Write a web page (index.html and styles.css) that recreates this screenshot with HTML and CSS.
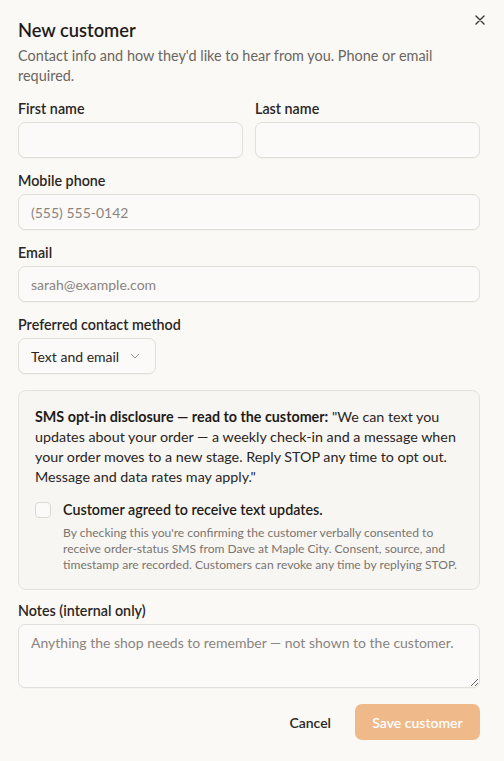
FILE: index.html
```
<!DOCTYPE html>
<html lang="en">
<head>
<meta charset="utf-8">
<title>New customer</title>
<link rel="stylesheet" href="styles.css">
</head>
<body>
<div class="dialog">
  <div class="header">
    <h1 class="title">New customer</h1>
    <button class="close" aria-label="Close">
      <svg width="10" height="10" viewBox="0 0 10 10"><path d="M1 1L9 9M9 1L1 9" stroke="#3a3532" stroke-width="1.4" stroke-linecap="round"/></svg>
    </button>
  </div>
  <p class="subtitle">Contact info and how they'd like to hear from you. Phone or email required.</p>

  <div class="row">
    <label class="field">
      <span class="label">First name</span>
      <input class="input" type="text">
    </label>
    <label class="field">
      <span class="label">Last name</span>
      <input class="input" type="text">
    </label>
  </div>

  <label class="field">
    <span class="label">Mobile phone</span>
    <input class="input" type="text" placeholder="(555) 555-0142">
  </label>

  <label class="field">
    <span class="label">Email</span>
    <input class="input" type="text" placeholder="sarah@example.com">
  </label>

  <div class="field">
    <span class="label">Preferred contact method</span>
    <div class="select">
      <span>Text and email</span>
      <svg width="10" height="6" viewBox="0 0 10 6"><path d="M1 1L5 5L9 1" fill="none" stroke="#9a948e" stroke-width="1"/></svg>
    </div>
  </div>

  <div class="disclosure">
    <p class="disclosure-text"><strong>SMS opt-in disclosure — read to the customer:</strong> "We can text you updates about your order — a weekly check-in and a message when your order moves to a new stage. Reply STOP any time to opt out. Message and data rates may apply."</p>
    <div class="consent">
      <span class="checkbox"></span>
      <div class="consent-body">
        <span class="consent-label">Customer agreed to receive text updates.</span>
        <p class="consent-note">By checking this you're confirming the customer verbally consented to receive order-status SMS from Dave at Maple City. Consent, source, and timestamp are recorded. Customers can revoke any time by replying STOP.</p>
      </div>
    </div>
  </div>

  <label class="field notes">
    <span class="label">Notes (internal only)</span>
    <textarea class="textarea" placeholder="Anything the shop needs to remember — not shown to the customer."></textarea>
  </label>

  <div class="actions">
    <button class="btn-cancel">Cancel</button>
    <button class="btn-save">Save customer</button>
  </div>
</div>
</body>
</html>
```
FILE: styles.css
```
* { box-sizing: border-box; }
html, body { margin: 0; }
body {
  background: #faf9f6;
  font-family: "Segoe UI", Lato, "Liberation Sans", sans-serif;
  color: #2a2522;
}
.dialog {
  padding: 18px 24px 18px 18px;
  display: flex;
  flex-direction: column;
}
.header {
  display: flex;
  justify-content: space-between;
  align-items: flex-start;
}
.title {
  margin: 0;
  font-size: 18.3px;
  line-height: 24px;
  font-weight: 600;
  color: #1f1b18;
}
.close {
  border: 0;
  background: none;
  padding: 0;
  margin: -3px -5px 0 0;
  width: 10px;
  height: 10px;
  display: flex;
  cursor: pointer;
}
.subtitle {
  margin: 4px 0 0;
  font-size: 14.45px;
  line-height: 20px;
  color: #6b6560;
}
.row {
  display: grid;
  grid-template-columns: 1fr 1fr;
  gap: 12px;
}
.field {
  display: flex;
  flex-direction: column;
  gap: 4px;
  margin-top: 14px;
}
.label {
  font-size: 14.3px;
  line-height: 18px;
  font-weight: 600;
  color: #2a2522;
}
.input, .textarea {
  font: inherit;
  font-size: 14px;
  height: 36px;
  border: 1px solid #e2dfda;
  border-radius: 7px;
  background: #fbfaf8;
  padding: 0 12px;
  color: #2a2522;
  box-shadow: 0 1px 1px rgba(0,0,0,0.03);
  width: 100%;
}
.input::placeholder, .textarea::placeholder { color: #8a847f; }
.select {
  align-self: flex-start;
  height: 36px;
  width: 138px;
  display: flex;
  align-items: center;
  justify-content: space-between;
  padding: 0 15px 0 12px;
  border: 1px solid #e2dfda;
  border-radius: 7px;
  background: #fbfaf8;
  font-size: 14px;
  color: #2a2522;
  box-shadow: 0 1px 1px rgba(0,0,0,0.03);
}
.disclosure {
  margin-top: 16px;
  border: 1px solid #e5e2dd;
  border-radius: 8px;
  background: #f7f6f3;
  padding: 16px 16px 16px;
}
.disclosure-text {
  margin: 0;
  font-size: 14.3px;
  line-height: 20px;
  color: #2a2522;
}
.disclosure-text strong { font-weight: 700; color: #1f1b18; }
.consent {
  display: flex;
  gap: 12px;
  margin-top: 13px;
}
.checkbox {
  flex: none;
  width: 16px;
  height: 16px;
  margin-top: 2px;
  border: 1px solid #dcd8d2;
  border-radius: 4px;
  background: #fbfaf8;
}
.consent-body { display: flex; flex-direction: column; gap: 5px; }
.consent-label {
  font-size: 14.3px;
  line-height: 20px;
  font-weight: 600;
  color: #1f1b18;
}
.consent-note {
  margin: 0;
  font-size: 12.1px;
  line-height: 16px;
  color: #7a746f;
}
.notes { margin-top: 12px; }
.textarea {
  height: 64px;
  padding: 8px 12px;
  line-height: 20px;
  resize: vertical;
  display: block;
}
.actions {
  margin-top: 16px;
  display: flex;
  justify-content: flex-end;
  gap: 12px;
}
.btn-cancel, .btn-save {
  font: inherit;
  font-size: 14px;
  font-weight: 600;
  height: 36px;
  border-radius: 7px;
  border: 0;
  cursor: pointer;
}
.btn-cancel {
  background: none;
  color: #2a2522;
  padding: 0 12px;
}
.btn-save {
  background: #f0b98a;
  color: #fff;
  width: 125px;
}
```
